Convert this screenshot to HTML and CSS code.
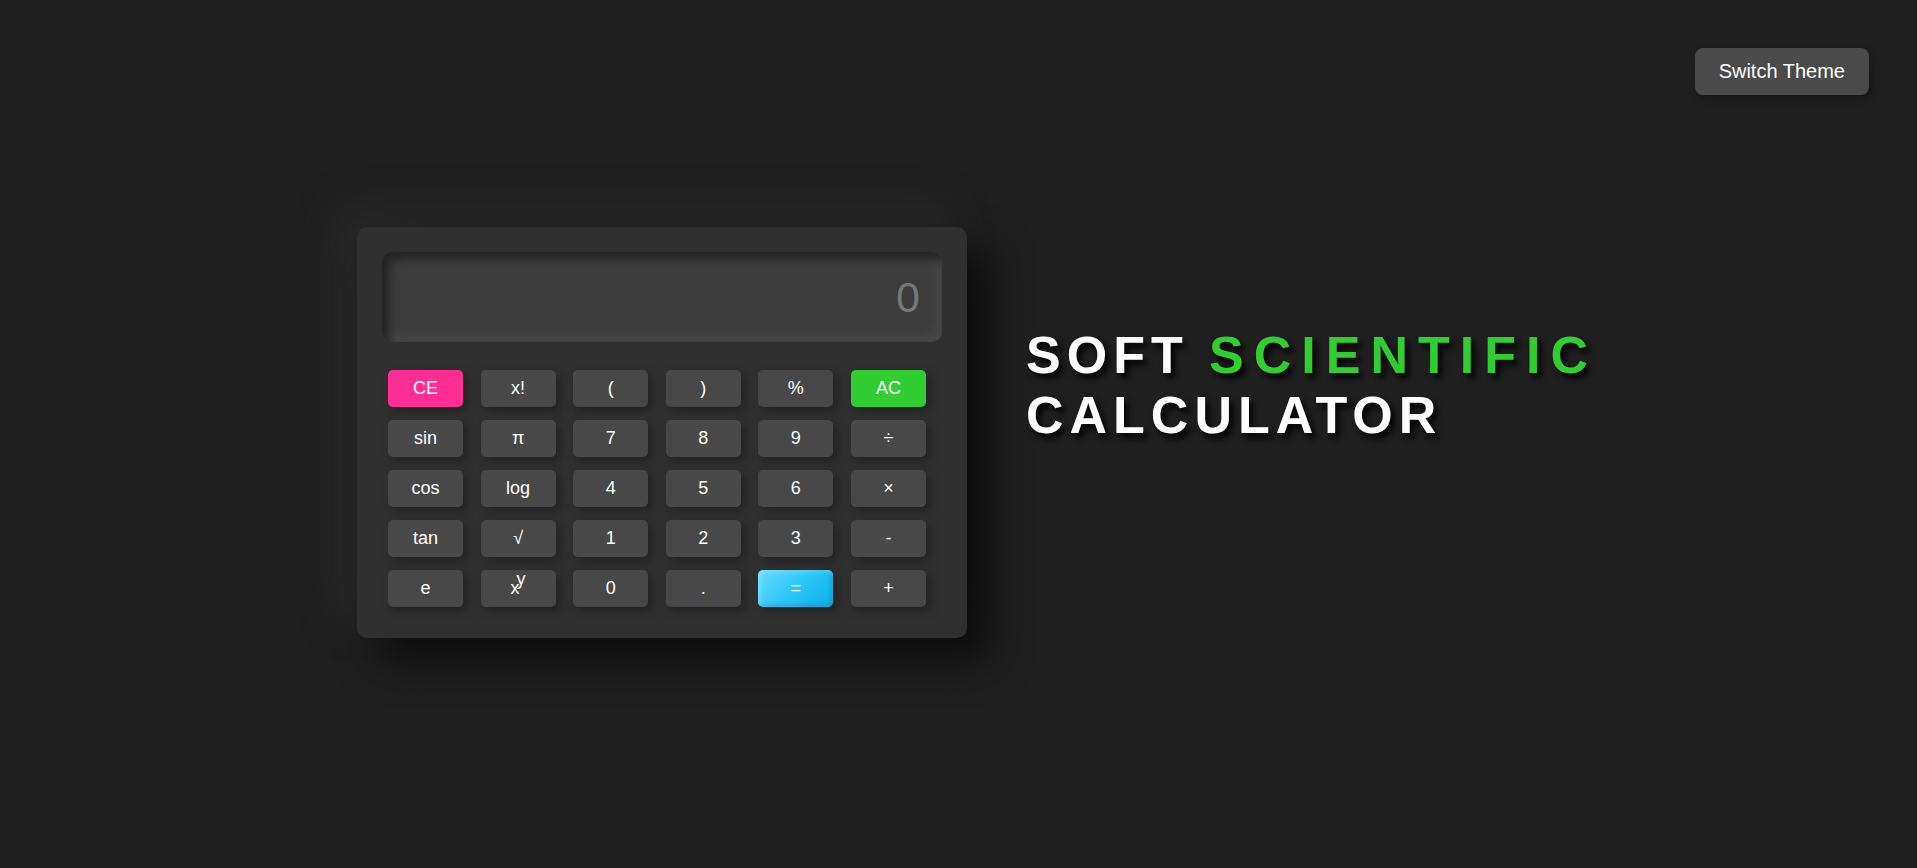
FILE: index.html
```html
<!DOCTYPE html>
<html lang="en">
<head>
<meta charset="utf-8">
<title>Soft Scientific Calculator</title>
<link rel="stylesheet" href="styles.css">
</head>
<body>
<header class="topbar">
  <button class="theme-toggle">Switch Theme</button>
</header>
<main class="stage">
  <section class="calculator">
    <div class="display">0</div>
    <div class="keys">
      <button class="key key-ce">CE</button>
      <button class="key">x!</button>
      <button class="key">(</button>
      <button class="key">)</button>
      <button class="key">%</button>
      <button class="key key-ac">AC</button>

      <button class="key">sin</button>
      <button class="key">π</button>
      <button class="key">7</button>
      <button class="key">8</button>
      <button class="key">9</button>
      <button class="key">÷</button>

      <button class="key">cos</button>
      <button class="key">log</button>
      <button class="key">4</button>
      <button class="key">5</button>
      <button class="key">6</button>
      <button class="key">×</button>

      <button class="key">tan</button>
      <button class="key">√</button>
      <button class="key">1</button>
      <button class="key">2</button>
      <button class="key">3</button>
      <button class="key">-</button>

      <button class="key">e</button>
      <button class="key">x<sup class="pow">y</sup></button>
      <button class="key">0</button>
      <button class="key">.</button>
      <button class="key key-eq">=</button>
      <button class="key">+</button>
    </div>
  </section>
  <h1 class="title">SOFT <span class="accent">SCIENTIFIC</span><br>CALCULATOR</h1>
</main>
</body>
</html>
```

FILE: styles.css
```css
* {
  box-sizing: border-box;
}

html, body {
  margin: 0;
  padding: 0;
}

body {
  background: #1f1f1f;
  font-family: "Liberation Sans", Arial, sans-serif;
  color: #ffffff;
  min-height: 868px;
  overflow: hidden;
}

.topbar {
  display: flex;
  justify-content: flex-end;
  padding: 48px 48px 0 0;
}

.theme-toggle {
  font-family: "Liberation Sans", Arial, sans-serif;
  font-size: 20px;
  line-height: 23px;
  color: #ffffff;
  background: #4a4a4a;
  border: none;
  border-radius: 8px;
  padding: 12px 24px;
  box-shadow: 3px 3px 8px rgba(0, 0, 0, 0.3);
}

.stage {
  display: flex;
  align-items: flex-start;
  gap: 59px;
  padding: 132px 0 0 357px;
}

.calculator {
  width: 610px;
  flex: 0 0 610px;
  background: #303030;
  border-radius: 10px;
  padding: 25px 25px 31px 25px;
  box-shadow: 22px 22px 40px #0d0d0d, -18px -18px 36px #2b2b2b;
}

.display {
  height: 90px;
  border-radius: 10px;
  background: #3c3c3c;
  box-shadow: inset 7px 7px 10px #252525, inset -7px -7px 10px #464646;
  color: #777777;
  font-size: 43px;
  display: flex;
  align-items: center;
  justify-content: flex-end;
  padding-right: 22px;
}

.keys {
  display: grid;
  grid-template-columns: repeat(6, 75px);
  grid-auto-rows: 37px;
  column-gap: 17.6px;
  row-gap: 13px;
  margin: 28px 0 0 6px;
}

.key {
  font-family: "Liberation Sans", Arial, sans-serif;
  font-size: 18px;
  color: #ffffff;
  background: #484848;
  border: none;
  border-radius: 5px;
  padding: 0;
  display: flex;
  align-items: center;
  justify-content: center;
  box-shadow: 4px 4px 8px #232323;
}

.key-ce {
  background: #ff2e94;
}

.key-ac {
  background: #32cd32;
}

.key-eq {
  background: linear-gradient(135deg, #6adcff 0%, #2cc6f7 50%, #0ab1e7 100%);
  box-shadow: 4px 4px 8px #232323, inset 2px 2px 4px rgba(255, 255, 255, 0.25), inset -2px -2px 4px rgba(0, 90, 140, 0.25);
}

.pow {
  font-size: 18px;
  vertical-align: 0;
  position: relative;
  top: -10px;
  margin-left: -3px;
  line-height: 0;
}

.title {
  margin: 98px 0 0 0;
  font-family: "Liberation Sans", Arial, sans-serif;
  font-weight: 700;
  font-size: 52px;
  line-height: 60px;
  letter-spacing: 6px;
  color: #ffffff;
  text-shadow: 4px 5px 6px rgba(0, 0, 0, 0.9);
  white-space: nowrap;
}

.accent {
  color: #32cd32;
  letter-spacing: 10px;
}
```
